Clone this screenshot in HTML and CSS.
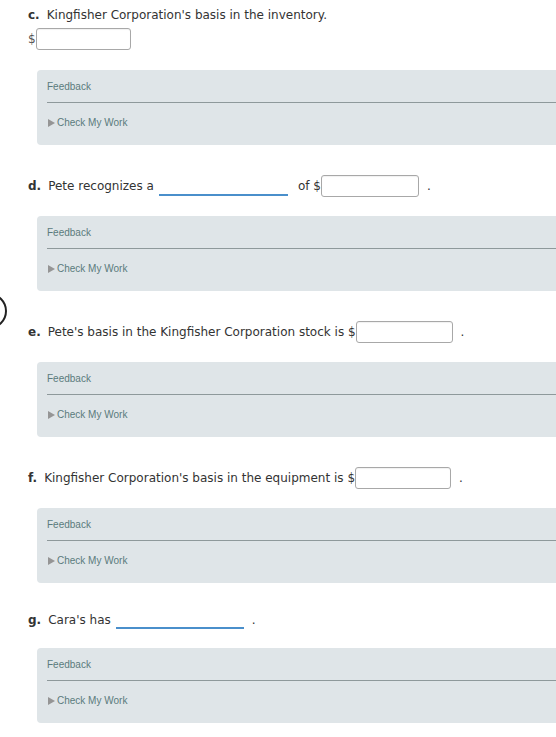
FILE: index.html
```html
<!DOCTYPE html>
<html>
<head>
<meta charset="utf-8">
<link rel="stylesheet" href="styles.css">
</head>
<body>
<div class="page">
  <div class="marker"></div>

  <section class="item item-first">
    <div class="q-line"><span class="label">c.</span>Kingfisher Corporation's basis in the inventory.</div>
    <div class="answer-row"><span class="dollar">$</span><span class="input w95"></span></div>
    <div class="panel">
      <div class="fb">Feedback</div>
      <div class="rule"></div>
      <div class="check"><span class="tri"></span>Check My Work</div>
    </div>
  </section>

  <section class="item">
    <div class="row"><span class="label">d.</span><span>Pete recognizes a</span><span class="blank w129"></span><span class="of">of $</span><span class="input w98"></span><span class="dot">.</span></div>
    <div class="panel">
      <div class="fb">Feedback</div>
      <div class="rule"></div>
      <div class="check"><span class="tri"></span>Check My Work</div>
    </div>
  </section>

  <section class="item">
    <div class="row"><span class="label">e.</span><span>Pete's basis in the Kingfisher Corporation stock is $</span><span class="input w97"></span><span class="dot">.</span></div>
    <div class="panel">
      <div class="fb">Feedback</div>
      <div class="rule"></div>
      <div class="check"><span class="tri"></span>Check My Work</div>
    </div>
  </section>

  <section class="item">
    <div class="row"><span class="label">f.</span><span>Kingfisher Corporation's basis in the equipment is $</span><span class="input w96"></span><span class="dot">.</span></div>
    <div class="panel">
      <div class="fb">Feedback</div>
      <div class="rule"></div>
      <div class="check"><span class="tri"></span>Check My Work</div>
    </div>
  </section>

  <section class="item item-g">
    <div class="row row-short"><span class="label">g.</span><span>Cara's has</span><span class="blank w128"></span><span class="dot">.</span></div>
    <div class="panel">
      <div class="fb">Feedback</div>
      <div class="rule"></div>
      <div class="check"><span class="tri"></span>Check My Work</div>
    </div>
  </section>
</div>
</body>
</html>
```

FILE: styles.css
```css
html, body {
  margin: 0;
  padding: 0;
  overflow: hidden;
  background: #ffffff;
}

.page {
  position: relative;
  padding: 7px 0 0 28px;
  font-family: "DejaVu Sans", Verdana, sans-serif;
  font-size: 12px;
  color: #333333;
}

.marker {
  position: absolute;
  left: -29px;
  top: 293px;
  width: 32px;
  height: 32px;
  border: 2.5px solid #222222;
  border-radius: 50%;
}

.label {
  font-weight: bold;
  margin-right: 7px;
}

.q-line {
  line-height: 16px;
  height: 16px;
}

.answer-row {
  display: flex;
  align-items: center;
  margin-top: 5px;
  height: 22px;
}

.dollar {
  color: #555;
}

.input {
  display: inline-block;
  box-sizing: border-box;
  height: 22px;
  border: 1px solid #a8a8a8;
  border-radius: 3px;
  background: #fff;
  box-shadow: inset 0 1px 1px rgba(0,0,0,0.06);
}

.w95 { width: 95px; }
.w98 { width: 98px; }
.w97 { width: 97px; }
.w96 { width: 96px; }
.w129 { width: 129px; }
.w128 { width: 128px; }

.row {
  display: flex;
  align-items: center;
  height: 22px;
  margin-top: 30px;
  white-space: nowrap;
}

.row-short {
  height: 18px;
  margin-top: 28px;
}

.blank {
  display: inline-block;
  box-sizing: border-box;
  height: 18px;
  margin-left: 5px;
  border-bottom: 2px solid #4a8fcb;
  align-self: flex-end;
  margin-bottom: 1px;
}

.row-short .blank {
  margin-bottom: 0;
}

.of {
  margin-left: 10px;
}

.dot {
  margin-left: 8px;
}

.panel {
  box-sizing: border-box;
  margin-left: 9px;
  height: 75px;
  margin-top: 19px;
  padding: 11px 0 0 10px;
  background: #dfe5e8;
  border-radius: 4px 0 0 4px;
  font-family: "Liberation Sans", Arial, sans-serif;
  font-size: 10px;
  color: #5b7b7c;
}

.item-first .panel {
  margin-top: 20px;
}

.fb {
  line-height: 12px;
  height: 12px;
}

.rule {
  margin-top: 9px;
  height: 0;
  border-top: 1.5px solid #8e999b;
}

.check {
  display: flex;
  align-items: center;
  margin-top: 14px;
  line-height: 12px;
  height: 12px;
}

.tri {
  display: inline-block;
  width: 0;
  height: 0;
  margin-left: 1px;
  margin-right: 2px;
  border-left: 7px solid #959595;
  border-top: 4px solid transparent;
  border-bottom: 4px solid transparent;
}
```
